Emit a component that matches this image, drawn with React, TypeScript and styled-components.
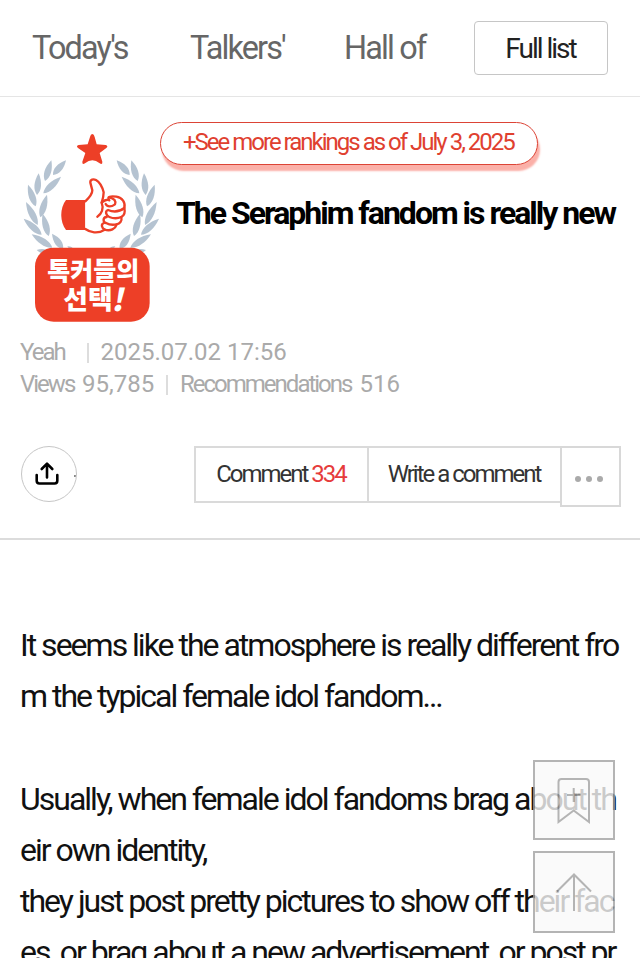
import React from "react";
import styled, { createGlobalStyle } from "styled-components";

const GlobalStyle = createGlobalStyle`
  * { box-sizing: border-box; }
  html, body { margin: 0; padding: 0; background: #fff; }
  body {
    width: 640px;
    height: 958px;
    overflow: hidden;
    font-family: Roboto, "Noto Sans CJK KR", sans-serif;
  }
  button { font-family: inherit; cursor: pointer; }
`;

const Page = styled.div`
  width: 640px;
  height: 958px;
  overflow: hidden;
  background: #fff;
`;

const Header = styled.header`
  display: flex;
  height: 97px;
  padding: 21px 32px 0;
  border-bottom: 1px solid #e5e5e5;
`;

const NavItem = styled.a<{ $width: number }>`
  flex: none;
  width: ${(p) => p.$width}px;
  color: #666;
  font-size: 32.4px;
  line-height: 55px;
  letter-spacing: -1.85px;
  white-space: nowrap;
`;

const FullList = styled.button`
  width: 134px;
  height: 54px;
  padding: 0 1px 0 0;
  border: 1px solid #c6c6c6;
  border-radius: 4px;
  background: #fff;
  color: #222;
  font-size: 28px;
  letter-spacing: -2px;
`;

const PostHead = styled.section`
  height: 443px;
  padding: 23px 20px 0;
  border-bottom: 2px solid #dcdcdc;
`;

const TitleRow = styled.div`
  display: flex;
  height: 216px;
`;

const BadgeArt = styled.svg`
  flex: none;
  display: block;
  width: 160px;
  height: 210px;
  margin-left: -10px;
`;

const TitleColumn = styled.div`
  flex: none;
  display: flex;
  flex-direction: column;
  margin: 2px 0 0 -10px;
`;

const RankingLink = styled.a`
  width: 378px;
  height: 43px;
  padding-left: 22px;
  border: 1px solid #dc4436;
  border-radius: 22px;
  box-shadow: 2px 6px 2px #fbb0a8;
  background: #fff;
  color: #e0402f;
  font-size: 24px;
  line-height: 39px;
  letter-spacing: -2px;
  white-space: nowrap;
`;

const Title = styled.h1`
  margin: 27px 0 0 16px;
  color: #000;
  font-size: 32px;
  font-weight: 700;
  line-height: 42px;
  letter-spacing: -2px;
  white-space: nowrap;
`;

const MetaLine = styled.div`
  display: flex;
  height: 32px;
  color: #aaa;
  font-size: 24px;
  line-height: 32px;
  white-space: pre;
`;

const MetaLabel = styled.span<{ $width: number }>`
  flex: none;
  width: ${(p) => p.$width}px;
  letter-spacing: -2px;
`;

const MetaValue = styled.span<{ $width?: number }>`
  flex: none;
  width: ${(p) => (p.$width ? `${p.$width}px` : "auto")};
`;

const Divider = styled.i`
  flex: none;
  width: 2px;
  height: 20px;
  margin: 7px 12px 0 0;
  background: #ddd;
`;

const Actions = styled.div`
  display: flex;
  align-items: flex-start;
  justify-content: space-between;
  margin: 46px -1px 0 1px;
`;

const Share = styled.button`
  display: flex;
  align-items: center;
  width: 56px;
  height: 56px;
  padding: 0 0 0 12px;
  border: 1px solid #c6c6c6;
  border-radius: 50%;
  background: #fff;
  overflow: hidden;

  i { width: 2px; height: 2px; margin: 4px 0 0 14px; background: #888; flex: none; }
  svg { flex: none; }
`;

const ButtonGroup = styled.div`
  display: flex;
  align-items: flex-start;
`;

const ActionButton = styled.button<{ $width: number }>`
  width: ${(p) => p.$width}px;
  height: 57px;
  margin-right: -1px;
  padding: 0 1px 2px 0;
  border: 2px solid #dadada;
  border-right-width: 1px;
  background: #fff;
  color: #333;
  font-size: 24px;
  letter-spacing: -2px;
  white-space: nowrap;

  em { color: #e63b3b; font-style: normal; }
`;

const MoreButton = styled.button`
  display: flex;
  align-items: center;
  justify-content: center;
  gap: 5px;
  width: 61px;
  height: 61px;
  padding: 4px 3px 0 0;
  border: 2px solid #d8d8d8;
  background: #fff;

  i { width: 6px; height: 6px; border-radius: 50%; background: #aaa; }
`;

const Article = styled.article`
  padding: 80px 20px 0;
`;

const Line = styled.p`
  height: 51.2px;
  margin: 0;
  color: #111;
  font-size: 32px;
  line-height: 51.2px;
  letter-spacing: -2px;
  white-space: nowrap;
`;

const Floating = styled.div`
  position: fixed;
  top: 760px;
  left: 533px;
  display: flex;
  flex-direction: column;
  gap: 11px;
`;

const FloatButton = styled.button<{ $height: number }>`
  width: 82px;
  height: ${(p) => p.$height}px;
  padding: 0;
  border: 2px solid #a2a2a2;
  background: #f9f9f9;
  opacity: 0.8;

  svg { display: block; }
`;

const leaves: [number, number, number, number][] = [
  [129, 165, 168, 121],
  [105, 183, 124, 121],
  [100, 220, 153, 170],
  [81, 225, 86, 160],
  [77, 259, 54, 194],
  [91, 292, 111, 224],
  [83, 315, 48, 246],
  [116, 348, 98, 281],
  [95, 344, 41, 296],
  [127, 383, 65, 343],
  [159, 387, 126, 341],
  [118, 398, 80, 390],
  [190, 388, 172, 379],
];

function Wreath() {
  return (
    <g fill="#b5c3d1">
      {leaves.map(([x1, y1, x2, y2], i) => {
        const length = Math.hypot(x2 - x1, y2 - y1);
        const angle = (Math.atan2(y2 - y1, x2 - x1) * 180) / Math.PI;
        const w = Math.min(16.5, length * 0.3);
        return (
          <path
            key={i}
            transform={`translate(${x1} ${y1}) rotate(${angle})`}
            d={`M0 0 C${length * 0.22} ${-w * 0.8} ${length * 0.6} ${-w * 0.8} ${length} 0 C${length * 0.6} ${w * 0.8} ${length * 0.22} ${w * 0.8} 0 0Z`}
          />
        );
      })}
    </g>
  );
}

function Badge() {
  return (
    <BadgeArt viewBox="0 0 480 630">
      <Wreath />
      <g transform="translate(488 0) scale(-1 1)"><Wreath /></g>
      <path
        fill="#ed3f27"
        d="M247 42 Q252 42 254 51 L260 73 L287 75 Q296 78 289 84 L269 99 L277 125 Q278 135 269 130 Q247 112 225 130 Q216 135 217 125 L226 99 L204 84 Q197 78 206 75 L233 73 L240 51 Q242 42 247 42Z"
      />
      <path fill="#ed3f27" d="M168 240 H226 V330 H168 C149 306 149 264 168 240Z" />
      <g fill="#fff" stroke="#ed3f27" strokeWidth="7" strokeLinecap="round" strokeLinejoin="round">
        <path d="M226 244 C238 233 247 223 247 211 L241 188 C240 178 250 176 258 180 C270 187 278 205 281 217 C281 229 277 242 275 248 C286 238 292 237 298 241 C289 229 302 228 319 230 C337 233 347 247 343 264 C346 277 342 287 334 291 C337 304 329 311 320 313 C316 327 302 334 284 329 C263 343 240 337 226 327" />
        <path fill="none" d="M275 248 C282 266 275 282 262 290" />
        <path fill="none" d="M298 232 C313 235 319 244 315 253 C304 261 292 262 287 252" />
        <path fill="none" d="M343 264 C329 275 310 277 294 270 C284 273 288 287 298 291 C313 297 325 295 334 291" />
        <path fill="none" d="M290 291 C277 292 279 307 288 309 C299 315 311 315 320 313" />
        <path fill="none" d="M282 309 C271 313 276 325 284 329" />
      </g>
      <rect x="75" y="383" width="344" height="222" rx="56" fill="#ed3f27" />
      <g fill="#fff" fontFamily="'Noto Sans CJK KR', sans-serif" fontWeight="900">
        <text x="112" y="479" fontSize="76" textLength="276" lengthAdjust="spacingAndGlyphs">톡커들의</text>
        <text x="160" y="567" fontSize="79" textLength="148" lengthAdjust="spacingAndGlyphs">선택</text>
        <text transform="translate(304 572) skewX(-12)" fontSize="92">!</text>
      </g>
    </BadgeArt>
  );
}

const paragraphs = [
  "It seems like the atmosphere is really different fro",
  "m the typical female idol fandom...",
  "",
  "Usually, when female idol fandoms brag about th",
  "eir own identity,",
  "they just post pretty pictures to show off their fac",
  "es, or brag about a new advertisement, or post pr",
];

export default function App() {
  return (
    <Page>
      <GlobalStyle />
      <Header>
        <NavItem $width={158}>Today's</NavItem>
        <NavItem $width={154}>Talkers'</NavItem>
        <NavItem $width={130}>Hall of</NavItem>
        <FullList>Full list</FullList>
      </Header>
      <PostHead>
        <TitleRow>
          <Badge />
          <TitleColumn>
            <RankingLink>+See more rankings as of July 3, 2025</RankingLink>
            <Title>The Seraphim fandom is really new</Title>
          </TitleColumn>
        </TitleRow>
        <MetaLine>
          <MetaLabel $width={66.5}>Yeah</MetaLabel>
          <Divider />
          <MetaValue>2025.07.02 17:56</MetaValue>
        </MetaLine>
        <MetaLine>
          <MetaLabel $width={62}>Views</MetaLabel>
          <MetaValue $width={84}>95,785</MetaValue>
          <Divider />
          <MetaLabel $width={179.5}>Recommendations</MetaLabel>
          <MetaValue>516</MetaValue>
        </MetaLine>
        <Actions>
          <Share aria-label="Share">
            <svg width="26" height="26" viewBox="0 0 26 26" fill="none" stroke="#000" strokeWidth="2.6" strokeLinecap="round" strokeLinejoin="round">
              <path d="M13 16.5V3M7.7 8L13 2.7L18.3 8M2.7 14V19.8Q2.7 22.5 5.4 22.5H20.6Q23.3 22.5 23.3 19.8V14" />
            </svg>
            <i />
          </Share>
          <ButtonGroup>
            <ActionButton $width={174}>Comment <em>334</em></ActionButton>
            <ActionButton $width={194}>Write a comment</ActionButton>
            <MoreButton aria-label="More"><i /><i /><i /></MoreButton>
          </ButtonGroup>
        </Actions>
      </PostHead>
      <Article>
        {paragraphs.map((text, i) => <Line key={i}>{text}</Line>)}
      </Article>
      <Floating>
        <FloatButton $height={80} aria-label="Bookmark">
          <svg width="78" height="76" viewBox="0 0 78 76" fill="none" stroke="#a2a2a2" strokeWidth="2">
            <path d="M23.5 60V20Q23.5 17 26.5 17H51Q54 17 54 20V60L38.7 48.5Z M38.7 26V40M32 33H45.5" />
          </svg>
        </FloatButton>
        <FloatButton $height={82} aria-label="Back to top">
          <svg width="78" height="78" viewBox="0 0 78 78" fill="none" stroke="#a2a2a2" strokeWidth="2">
            <path d="M39 58V21M22 38.5L39 21.5L56 38.5" />
          </svg>
        </FloatButton>
      </Floating>
    </Page>
  );
}
